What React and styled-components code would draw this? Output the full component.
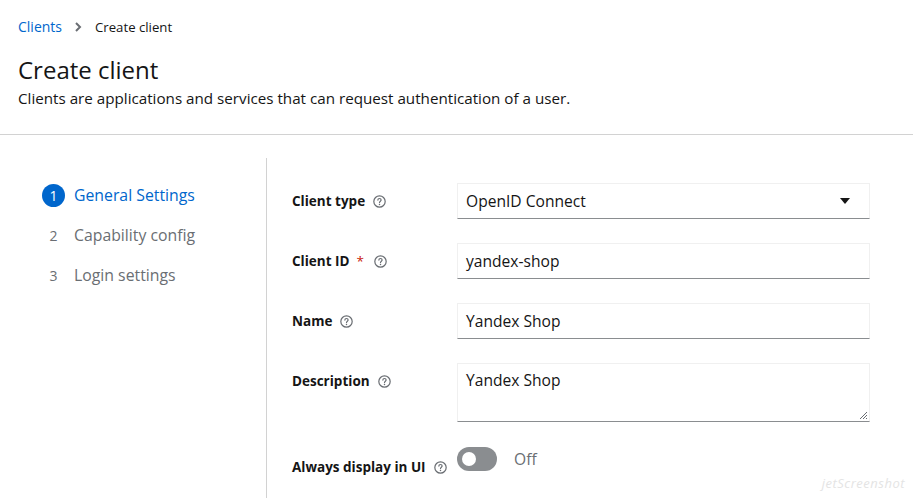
import React from "react";
import styled, { createGlobalStyle } from "styled-components";

const Global = createGlobalStyle`
  html, body { margin: 0; padding: 0; background: #fff; }
  body { font-family: "Open Sans", "Noto Sans", sans-serif; color: #151515; }
  * { box-sizing: border-box; }
`;

const Page = styled.div`
  width: 913px;
  height: 498px;
  overflow: hidden;
  position: relative;
  background: #fff;
`;

const Header = styled.header`
  padding: 17px 18px 0 18px;
  height: 135px;
  border-bottom: 1px solid #d2d2d2;
`;

const Breadcrumb = styled.nav`
  display: flex;
  align-items: center;
  gap: 10px;
  line-height: 20px;
`;

const Crumb = styled.span`
  color: ${(p) => (p.$link ? "#0066cc" : "#151515")};
  font-size: ${(p) => (p.$link ? "14px" : "13.2px")};
`;

const Chevron = styled.svg`
  width: 8px;
  height: 10px;
  margin: 0 3px 0 2px;
`;

const Title = styled.h1`
  margin: 18px 0 0 0;
  font-size: 24px;
  font-weight: 400;
  line-height: 30px;
`;

const Subtitle = styled.p`
  margin: 3px 0 0 0;
  font-size: 15.2px;
  line-height: 20px;
`;

const Body = styled.div`
  display: grid;
  grid-template-columns: 267px 1fr;
  padding-top: 23px;
`;

const Steps = styled.ol`
  list-style: none;
  margin: 0;
  padding: 25px 0 0 42px;
  display: flex;
  flex-direction: column;
  gap: 16px;
  border-right: 1px solid #d2d2d2;
  height: 340px;
`;

const Step = styled.li`
  display: flex;
  align-items: center;
  gap: 9px;
  height: 24px;
  font-size: 15.8px;
  color: ${(p) => (p.$active ? "#0066cc" : "#6a6e73")};
`;

const StepNum = styled.span`
  width: 23px;
  height: 23px;
  border-radius: 50%;
  display: flex;
  align-items: center;
  justify-content: center;
  font-size: 14px;
  background: ${(p) => (p.$active ? "#0066cc" : "transparent")};
  color: ${(p) => (p.$active ? "#fff" : "#6a6e73")};
`;

const Form = styled.div`
  padding: 25px 42px 0 25px;
  display: flex;
  flex-direction: column;
  gap: 24px;
`;

const Row = styled.div`
  display: grid;
  grid-template-columns: 165px 413px;
  align-items: start;
`;

const Label = styled.div`
  display: flex;
  align-items: center;
  gap: 8px;
  height: ${(p) => p.$h || 36}px;
  padding-top: ${(p) => p.$pt || 0}px;
  font-size: 13.5px;
  font-weight: 700;
  color: #151515;
  white-space: nowrap;
`;

const Required = styled.span`
  color: #c9190b;
  font-weight: 400;
  margin-left: -1px;
  margin-right: 2px;
`;

const Field = styled.div`
  height: ${(p) => p.$h || 36}px;
  border: 1px solid #f0f0f0;
  border-bottom-color: #8a8d90;
  padding: ${(p) => (p.$top ? "5px 8px 0" : "0 8px")};
  display: flex;
  align-items: ${(p) => (p.$top ? "flex-start" : "center")};
  justify-content: space-between;
  font-size: 15.6px;
  color: #151515;
  position: relative;
`;

const Caret = styled.svg`
  width: 10px;
  height: 6px;
  margin-right: 11px;
`;

const Resize = styled.svg`
  position: absolute;
  right: 1px;
  bottom: 1px;
  width: 9px;
  height: 9px;
`;

const ToggleWrap = styled.div`
  display: flex;
  align-items: center;
  gap: 17px;
  height: 24px;
  margin-top: 1px;
  font-size: 15.6px;
  color: #6a6e73;
`;

const Track = styled.span`
  width: 40px;
  height: 24px;
  border-radius: 12px;
  background: #8a8d90;
  position: relative;
  display: inline-block;
`;

const Knob = styled.span`
  position: absolute;
  top: 5px;
  left: 5px;
  width: 14px;
  height: 14px;
  border-radius: 50%;
  background: #fff;
`;

const Watermark = styled.div`
  position: absolute;
  right: 8px;
  bottom: 6px;
  font-size: 13px;
  font-style: italic;
  color: #e4e4e4;
  letter-spacing: 0.5px;
`;

const Help = () => (
  <svg width="13" height="13" viewBox="0 0 16 16" aria-hidden="true">
    <circle cx="8" cy="8" r="7" fill="none" stroke="#6a6e73" strokeWidth="1.5" />
    <path
      d="M6 6.3a2 2 0 0 1 4 0c0 1.3-2 1.5-2 3"
      fill="none"
      stroke="#6a6e73"
      strokeWidth="1.5"
      strokeLinecap="round"
    />
    <circle cx="8" cy="11.6" r="0.9" fill="#6a6e73" />
  </svg>
);

export default function App() {
  return (
    <Page>
      <Global />
      <Header>
        <Breadcrumb>
          <Crumb $link>Clients</Crumb>
          <Chevron viewBox="0 0 8 10">
            <path d="M2 1l4 4-4 4" fill="none" stroke="#6a6e73" strokeWidth="2" />
          </Chevron>
          <Crumb>Create client</Crumb>
        </Breadcrumb>
        <Title>Create client</Title>
        <Subtitle>
          Clients are applications and services that can request authentication of a user.
        </Subtitle>
      </Header>
      <Body>
        <Steps>
          <Step $active>
            <StepNum $active>1</StepNum>General Settings
          </Step>
          <Step>
            <StepNum>2</StepNum>Capability config
          </Step>
          <Step>
            <StepNum>3</StepNum>Login settings
          </Step>
        </Steps>
        <Form>
          <Row>
            <Label>
              Client type <Help />
            </Label>
            <Field>
              OpenID Connect
              <Caret viewBox="0 0 10 6">
                <path d="M0 0h10L5 6z" fill="#151515" />
              </Caret>
            </Field>
          </Row>
          <Row>
            <Label>
              Client ID <Required>*</Required> <Help />
            </Label>
            <Field>yandex-shop</Field>
          </Row>
          <Row>
            <Label>
              Name <Help />
            </Label>
            <Field>Yandex Shop</Field>
          </Row>
          <Row>
            <Label>
              Description <Help />
            </Label>
            <Field $h={59} $top>
              Yandex Shop
              <Resize viewBox="0 0 9 9">
                <path d="M8 1L1 8M8 4L4 8M8 7L7 8" stroke="#6a6e73" strokeWidth="1" />
              </Resize>
            </Field>
          </Row>
          <Row>
            <Label $h={34} $pt={8}>
              Always display in UI <Help />
            </Label>
            <ToggleWrap>
              <Track>
                <Knob />
              </Track>
              Off
            </ToggleWrap>
          </Row>
        </Form>
      </Body>
      <Watermark>jetScreenshot</Watermark>
    </Page>
  );
}
